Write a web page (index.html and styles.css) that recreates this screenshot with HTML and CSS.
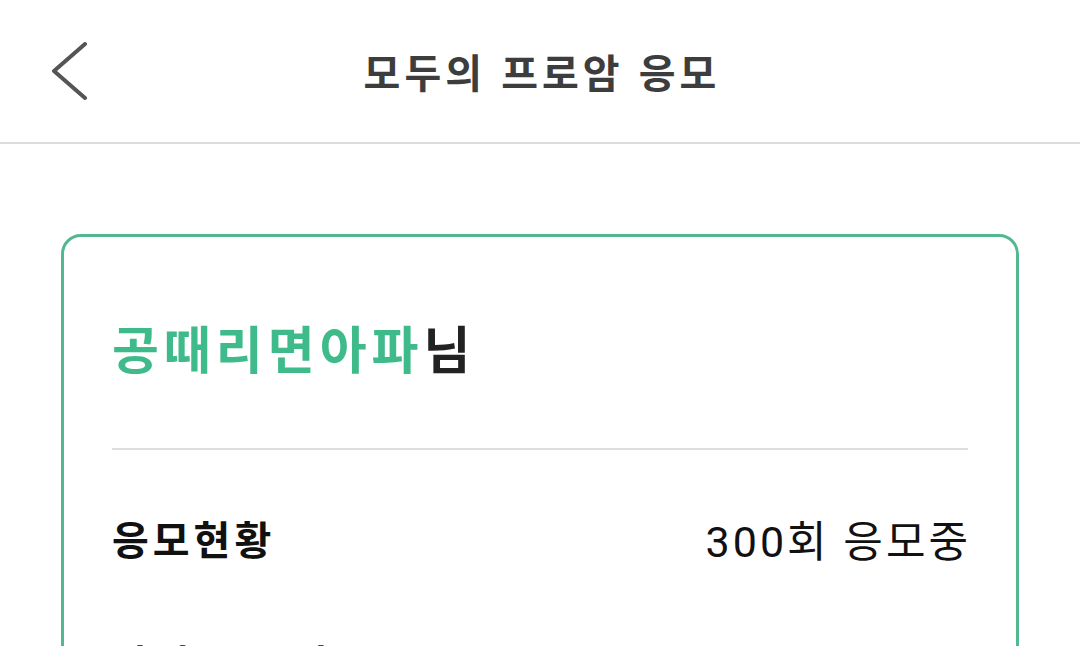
FILE: index.html
```html
<!DOCTYPE html>
<html lang="ko">
<head>
<meta charset="utf-8">
<link rel="stylesheet" href="styles.css">
</head>
<body>
<header class="topbar">
  <div class="topbar-left">
    <svg class="back" width="40" height="60" viewBox="0 0 40 60">
      <polyline points="34,2 3,29 34,56" fill="none" stroke="#555" stroke-width="4" stroke-linecap="round" stroke-linejoin="round"/>
    </svg>
  </div>
  <h1 class="title">모두의 프로암 응모</h1>
  <div class="topbar-right"></div>
</header>
<main class="content">
  <section class="card">
    <div class="name"><span class="nick">공때리면아파</span>님</div>
    <hr class="divider">
    <div class="row">
      <span class="label">응모현황</span>
      <span class="value">300회 응모중</span>
    </div>
    <div class="row">
      <span class="label">나의 응모권</span>
      <span class="value"></span>
    </div>
  </section>
</main>
</body>
</html>
```
FILE: styles.css
```css
html, body {
  margin: 0;
  padding: 0;
  background: #fff;
  font-family: "Noto Sans CJK KR", "Noto Sans", sans-serif;
  overflow: hidden;
}
.topbar {
  display: grid;
  grid-template-columns: 1fr auto 1fr;
  align-items: center;
  height: 142px;
  border-bottom: 2px solid #dcdcdc;
}
.topbar-left {
  display: flex;
  align-items: center;
  padding-left: 51px;
}
.back {
  display: block;
  margin-top: 1px;
}
.title {
  margin: 0 0 0 4px;
  font-size: 40px;
  font-weight: 700;
  color: #3d3d3d;
  letter-spacing: 4px;
}
.content {
  padding: 90px 61px 0;
}
.card {
  border: 3px solid #52b88f;
  border-radius: 20px;
  padding: 0 48px 40px;
  height: 700px;
}
.name {
  margin-top: 78px;
  font-size: 51px;
  line-height: 64px;
  font-weight: 700;
  color: #222;
  letter-spacing: 5px;
}
.nick {
  color: #3fbb8b;
}
.divider {
  border: 0;
  height: 2px;
  background: #dddddd;
  margin: 69px 0 0;
}
.row {
  display: flex;
  justify-content: space-between;
  align-items: center;
  height: 50px;
  margin-top: 63px;
  font-size: 40px;
  color: #111;
}
.row + .row {
  margin-top: 74px;
}
.label {
  font-weight: 700;
  letter-spacing: 4px;
}
.value {
  font-family: "Roboto", "Noto Sans CJK KR", sans-serif;
  font-size: 43px;
  font-weight: 400;
  letter-spacing: 3px;
  margin-right: -3px;
}
```
